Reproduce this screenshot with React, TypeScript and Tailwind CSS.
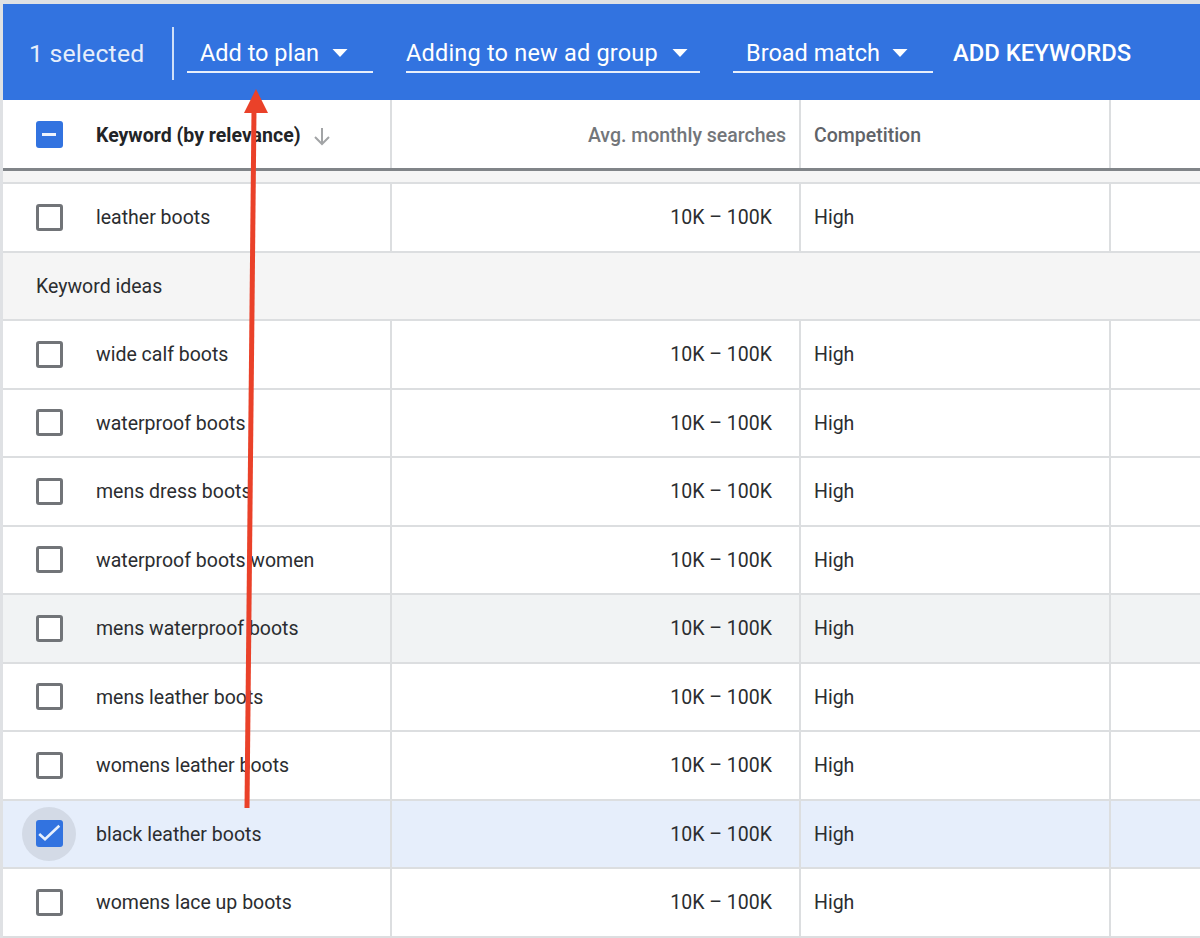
import React from "react";

const rows: { name: string; tone?: string; checked?: boolean }[] = [
  { name: "wide calf boots" },
  { name: "waterproof boots" },
  { name: "mens dress boots" },
  { name: "waterproof boots women" },
  { name: "mens waterproof boots", tone: "gray" },
  { name: "mens leather boots" },
  { name: "womens leather boots" },
  { name: "black leather boots", tone: "blue", checked: true },
  { name: "womens lace up boots" },
];

function Box({ checked }: { checked?: boolean }) {
  if (checked) {
    return (
      <span className="relative flex h-[54px] w-[54px] items-center justify-center rounded-full bg-[#d3dae6]">
        <span className="flex h-[27px] w-[27px] items-center justify-center rounded-[3px] bg-[#3273e0]">
          <svg width="27" height="27" viewBox="0 0 27 27" fill="none">
            <path d="M3.2 14l5.8 5.2L23.3 5.8" stroke="#e8f0fd" strokeWidth="2.6" />
          </svg>
        </span>
      </span>
    );
  }
  return <span className="block h-[27px] w-[27px] rounded-[3px] border-[3px] border-[#717478] bg-white" />;
}

function Row({ name, tone, checked }: { name: string; tone?: string; checked?: boolean }) {
  const bg = tone === "gray" ? "bg-[#f1f3f4]" : tone === "blue" ? "bg-[#e6eefb]" : "bg-white";
  return (
    <div className={`grid h-[68.5px] grid-cols-[389px_409px_310px_1fr] border-b-2 border-[#dcdee0] ${bg}`}>
      <div className="flex items-center border-r-2 border-[#dcdee0]">
        <div className="flex w-[93px] shrink-0 justify-center pr-[1px]">
          <Box checked={checked} />
        </div>
        <span className="pt-[1px] text-[19.5px] text-[#2b2d30]">{name}</span>
      </div>
      <div className="flex items-center justify-end border-r-2 border-[#dcdee0] pr-[27px] pt-[1px] text-[19.5px] text-[#2b2d30]">
        10K – 100K
      </div>
      <div className="flex items-center border-r-2 border-[#dcdee0] pl-[13px] pt-[1px] text-[19.5px] text-[#2b2d30]">High</div>
      <div />
    </div>
  );
}

function Drop({ label, className }: { label: string; className: string }) {
  return (
    <div className={`mb-[2px] flex h-[44px] items-end justify-between border-b-2 border-[#e8effb] pb-[6px] text-[23.5px] leading-none text-white ${className}`}>
      <span>{label}</span>
      <svg width="16" height="8" viewBox="0 0 16 8" className="mb-[8px]">
        <path d="M0.5 0h15L8 8z" fill="#fff" />
      </svg>
    </div>
  );
}

export default function App() {
  return (
    <div className="relative h-[938px] w-[1200px] overflow-hidden border-l-[3px] border-t-[4px] border-[#dfe1e4] bg-white font-['Roboto',sans-serif]">
      <div className="flex h-[96px] items-center bg-[#3273e0] text-white">
        <span className="ml-[26px] mt-[3px] w-[143px] text-[24.8px] tracking-[0.2px] text-[#e6eefb]">1 selected</span>
        <span className="mt-[2px] h-[53px] w-[2px] bg-[#cfdff8]" />
        <Drop label="Add to plan" className="ml-[13px] w-[186px] pl-[13px] pr-[25px]" />
        <Drop label="Adding to new ad group" className="ml-[33px] w-[294px] pr-[12px] tracking-[0.2px]" />
        <Drop label="Broad match" className="ml-[33px] w-[200px] pl-[13px] pr-[25px]" />
        <span className="ml-[20px] mt-[3px] text-[23.8px] font-medium leading-none">ADD KEYWORDS</span>
      </div>
      <div className="grid h-[71px] grid-cols-[389px_409px_310px_1fr] border-b-[3px] border-[#808488] bg-white">
        <div className="flex items-center border-r-2 border-[#dcdee0]">
          <div className="flex w-[93px] shrink-0 justify-center pr-[1px]">
            <span className="flex h-[27px] w-[27px] items-center justify-center rounded-[3px] bg-[#3273e0]">
              <span className="h-[3px] w-[14px] bg-[#eef3fd]" />
            </span>
          </div>
          <span className="pt-[3px] text-[19.5px] font-bold text-[#222427]">Keyword (by relevance)</span>
          <svg width="20" height="20" viewBox="0 0 20 20" fill="none" className="ml-[11px] mt-[3px]">
            <path d="M10 2v16M3 11l7 7 7-7" stroke="#a2a4a6" strokeWidth="2" />
          </svg>
        </div>
        <div className="flex items-center justify-end border-r-2 border-[#dcdee0] pr-[13px] pt-[3px] text-[19.5px] font-medium text-[#73767a]">
          Avg. monthly searches
        </div>
        <div className="flex items-center border-r-2 border-[#dcdee0] pl-[13px] pt-[3px] text-[19.5px] font-medium text-[#5f6368]">Competition</div>
        <div />
      </div>
      <div className="h-[13px] border-b-2 border-[#dcdee0] bg-[#f5f5f5]" />
      <Row name="leather boots" />
      <div className="flex h-[68.5px] items-center border-b-2 border-[#dcdee0] bg-[#f5f5f5] pl-[33px] pt-[1px] text-[19.5px] text-[#2b2d30]">
        Keyword ideas
      </div>
      {rows.map((r) => (
        <Row key={r.name} {...r} />
      ))}
      <svg className="absolute left-[-3px] top-[-4px]" width="1200" height="938" viewBox="0 0 1200 938" fill="none">
        <path d="M247 808L254 110" stroke="#ea4129" strokeWidth="5" />
        <path d="M256 89L244 113H268z" fill="#ea4129" />
      </svg>
    </div>
  );
}
